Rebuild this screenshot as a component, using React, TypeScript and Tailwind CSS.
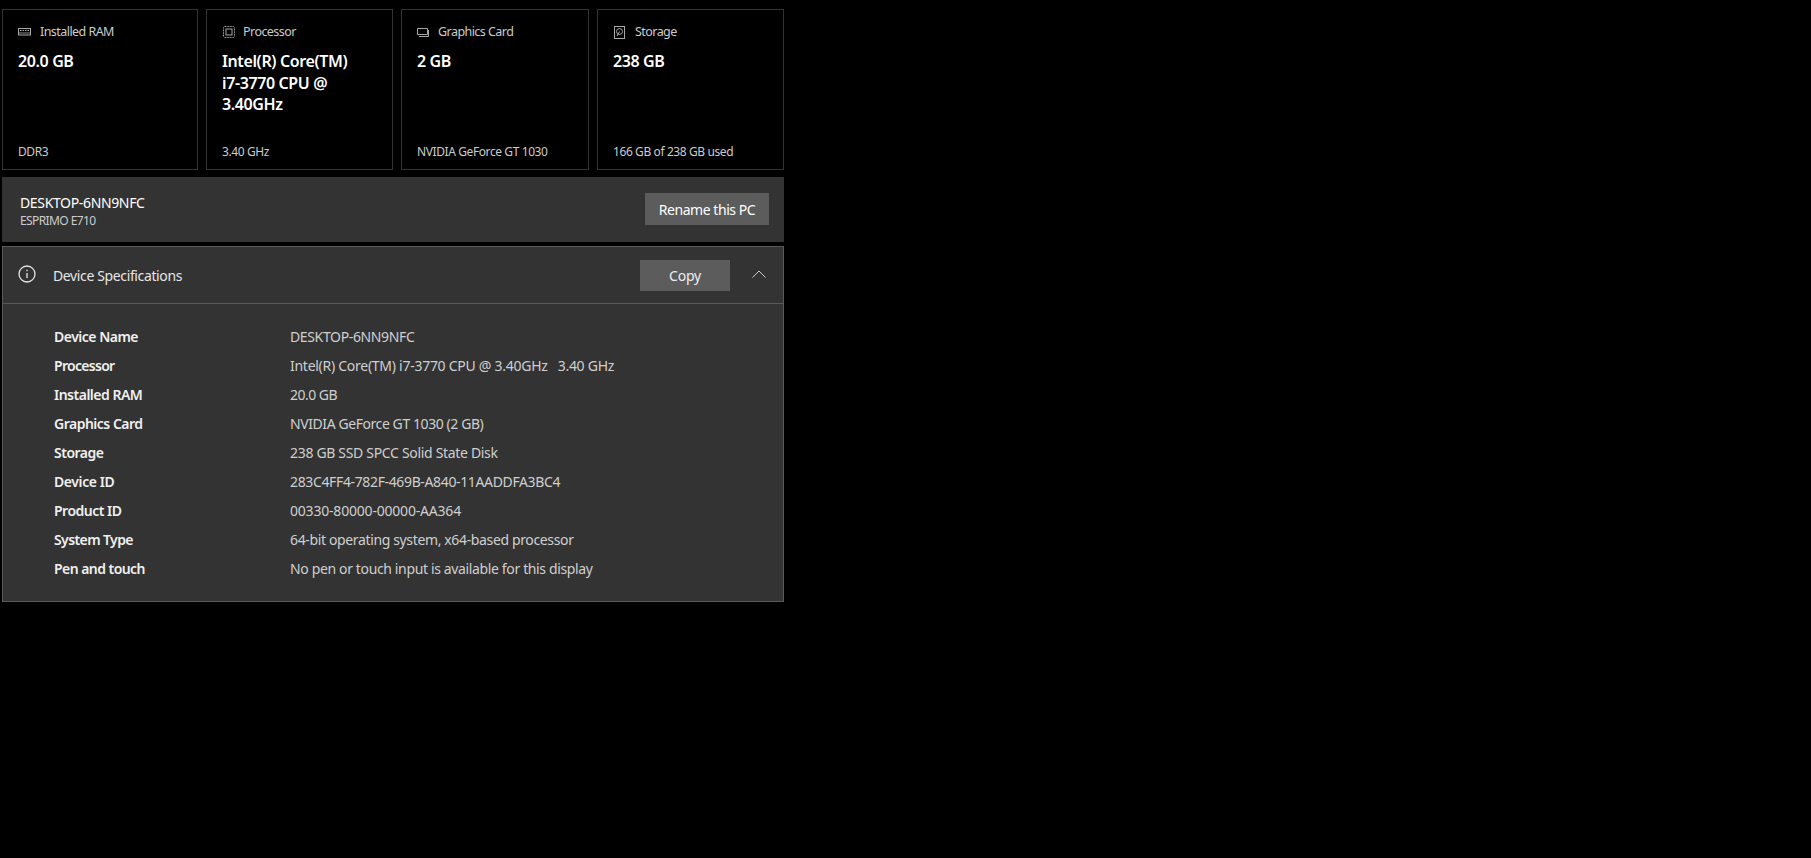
import React from "react";

const font = "font-['Noto_Sans','Open_Sans',sans-serif]";

function RamIcon() {
  return (
    <svg width="13" height="8" viewBox="0 0 13 8" fill="none" stroke="#a8a8a8" strokeWidth="1">
      <rect x="0.5" y="0.5" width="12" height="6.5" />
      <path d="M2 2.5h1.5M4.5 2.5h1.5M7 2.5h1.5M9.5 2.5h1.5" />
      <path d="M1 5h11" stroke="#8a8a8a" />
    </svg>
  );
}
function CpuIcon() {
  return (
    <svg width="12" height="12" viewBox="0 0 12 12" fill="none" stroke="#a8a8a8" strokeWidth="1">
      <rect x="0.5" y="0.5" width="11" height="11" rx="1.5" strokeDasharray="1 0.6" />
      <rect x="3" y="3" width="6" height="6" />
    </svg>
  );
}
function GpuIcon() {
  return (
    <svg width="13" height="11" viewBox="0 0 13 11" fill="none" stroke="#a8a8a8" strokeWidth="1">
      <path d="M0.5 1.5h10v6h-10zM2 9.5h9.5V3" />
    </svg>
  );
}
function DiskIcon() {
  return (
    <svg width="11" height="13" viewBox="0 0 11 13" fill="none" stroke="#a8a8a8" strokeWidth="1">
      <rect x="0.5" y="0.5" width="10" height="12" />
      <circle cx="5.5" cy="5.5" r="3" />
      <path d="M5.5 5.5L3 10" />
    </svg>
  );
}

const cards = [
  { w: "w-[196px]", icon: <RamIcon />, title: "Installed RAM", value: "20.0 GB", sub: "DDR3", gap: "gap-[9px]" },
  { w: "w-[187px]", icon: <CpuIcon />, title: "Processor", value: "Intel(R) Core(TM) i7-3770 CPU @ 3.40GHz", sub: "3.40 GHz", gap: "gap-[8px]" },
  { w: "w-[188px]", icon: <GpuIcon />, title: "Graphics Card", value: "2 GB", sub: "NVIDIA GeForce GT 1030", gap: "gap-[8px]" },
  { w: "w-[187px]", icon: <DiskIcon />, title: "Storage", value: "238 GB", sub: "166 GB of 238 GB used", gap: "gap-[9px]" },
];

const specs = [
  { k: "Device Name", v: "DESKTOP-6NN9NFC", kt: "tracking-[-0.5px]", vt: "tracking-[-0.36px]" },
  { k: "Processor", v: "Intel(R) Core(TM) i7-3770 CPU @ 3.40GHz   3.40 GHz", kt: "tracking-[-0.7px]", vt: "tracking-[-0.27px]" },
  { k: "Installed RAM", v: "20.0 GB", kt: "tracking-[-0.5px]", vt: "tracking-[-0.52px]" },
  { k: "Graphics Card", v: "NVIDIA GeForce GT 1030 (2 GB)", kt: "tracking-[-0.5px]", vt: "tracking-[-0.42px]" },
  { k: "Storage", v: "238 GB SSD SPCC Solid State Disk", kt: "tracking-[-0.5px]", vt: "tracking-[-0.32px]" },
  { k: "Device ID", v: "283C4FF4-782F-469B-A840-11AADDFA3BC4", kt: "tracking-[-0.4px]", vt: "tracking-[-0.36px]" },
  { k: "Product ID", v: "00330-80000-00000-AA364", kt: "tracking-[-0.5px]", vt: "tracking-[-0.2px]" },
  { k: "System Type", v: "64-bit operating system, x64-based processor", kt: "tracking-[-0.6px]", vt: "tracking-[-0.36px]" },
  { k: "Pen and touch", v: "No pen or touch input is available for this display", kt: "tracking-[-0.55px]", vt: "tracking-[-0.36px]" },
];

export default function App() {
  return (
    <div className={`min-h-[858px] bg-black text-white ${font} pt-[9px] pl-[2px]`}>
      <div className="w-[782px] flex flex-col">
        <div className="flex gap-[8px]">
          {cards.map((c) => (
            <div key={c.title} className={`${c.w} h-[161px] border border-[#333333] flex flex-col pl-[15px] pr-3 pt-[13px] pb-[8px]`}>
              <div className={`flex items-center ${c.gap} h-[18px]`}>
                <span className="w-[13px] flex justify-center shrink-0">{c.icon}</span>
                <span className="text-[12.5px] tracking-[-0.55px] text-[#cccccc]">{c.title}</span>
              </div>
              <div className="mt-[10px] max-w-[140px] text-[16px] leading-[21.5px] font-semibold tracking-[-0.38px] text-white">{c.value}</div>
              <div className="mt-auto text-[12px] tracking-[-0.4px] text-[#cccccc] leading-[18px]">{c.sub}</div>
            </div>
          ))}
        </div>

        <div className="mt-[7px] h-[65px] bg-[#333333] flex items-center justify-between pl-[18px] pr-[15px]">
          <div className="flex flex-col pt-[4px]">
            <span className="text-[14px] leading-[18px] tracking-[-0.35px] text-white">DESKTOP-6NN9NFC</span>
            <span className="text-[12px] leading-[17px] tracking-[-0.6px] text-[#cccccc]">ESPRIMO E710</span>
          </div>
          <div className="w-[124px] h-[32px] mb-[1px] bg-[#5c5c5c] flex items-center justify-center text-[14px] tracking-[-0.45px] text-white">Rename this PC</div>
        </div>

        <div className="mt-[4px] h-[356px] bg-[#333333] border border-[#5a5a5a] flex flex-col">
          <div className="h-[57px] shrink-0 border-b border-[#5a5a5a] flex items-center pl-[15px] pr-[17px]">
            <svg width="18" height="18" viewBox="0 0 18 18" fill="none" stroke="#e6e6e6" strokeWidth="1.3" className="mb-[2px]">
              <circle cx="9" cy="9" r="8" />
              <path d="M9 8v5M9 4.8v1.4" />
            </svg>
            <span className="ml-[17px] text-[14px] tracking-[-0.37px] text-[#e6e6e6]">Device Specifications</span>
            <div className="ml-auto w-[90px] h-[31px] bg-[#5c5c5c] flex items-center justify-center text-[14px] tracking-[-0.2px] text-[#eeeeee]">Copy</div>
            <svg width="14" height="8" viewBox="0 0 14 8" fill="none" stroke="#cccccc" strokeWidth="1" className="ml-[22px] mb-[3px]">
              <path d="M0.5 7.5L7 1l6.5 6.5" />
            </svg>
          </div>
          <div className="pl-[51px] pt-[18px] flex flex-col">
            {specs.map((s) => (
              <div key={s.k} className="h-[29px] flex items-center text-[14px]">
                <span className={`w-[236px] shrink-0 font-semibold ${s.kt} text-[#f0f0f0]`}>{s.k}</span>
                <span className={`whitespace-pre ${s.vt} text-[#cfcfcf]`}>{s.v}</span>
              </div>
            ))}
          </div>
        </div>
      </div>
    </div>
  );
}
